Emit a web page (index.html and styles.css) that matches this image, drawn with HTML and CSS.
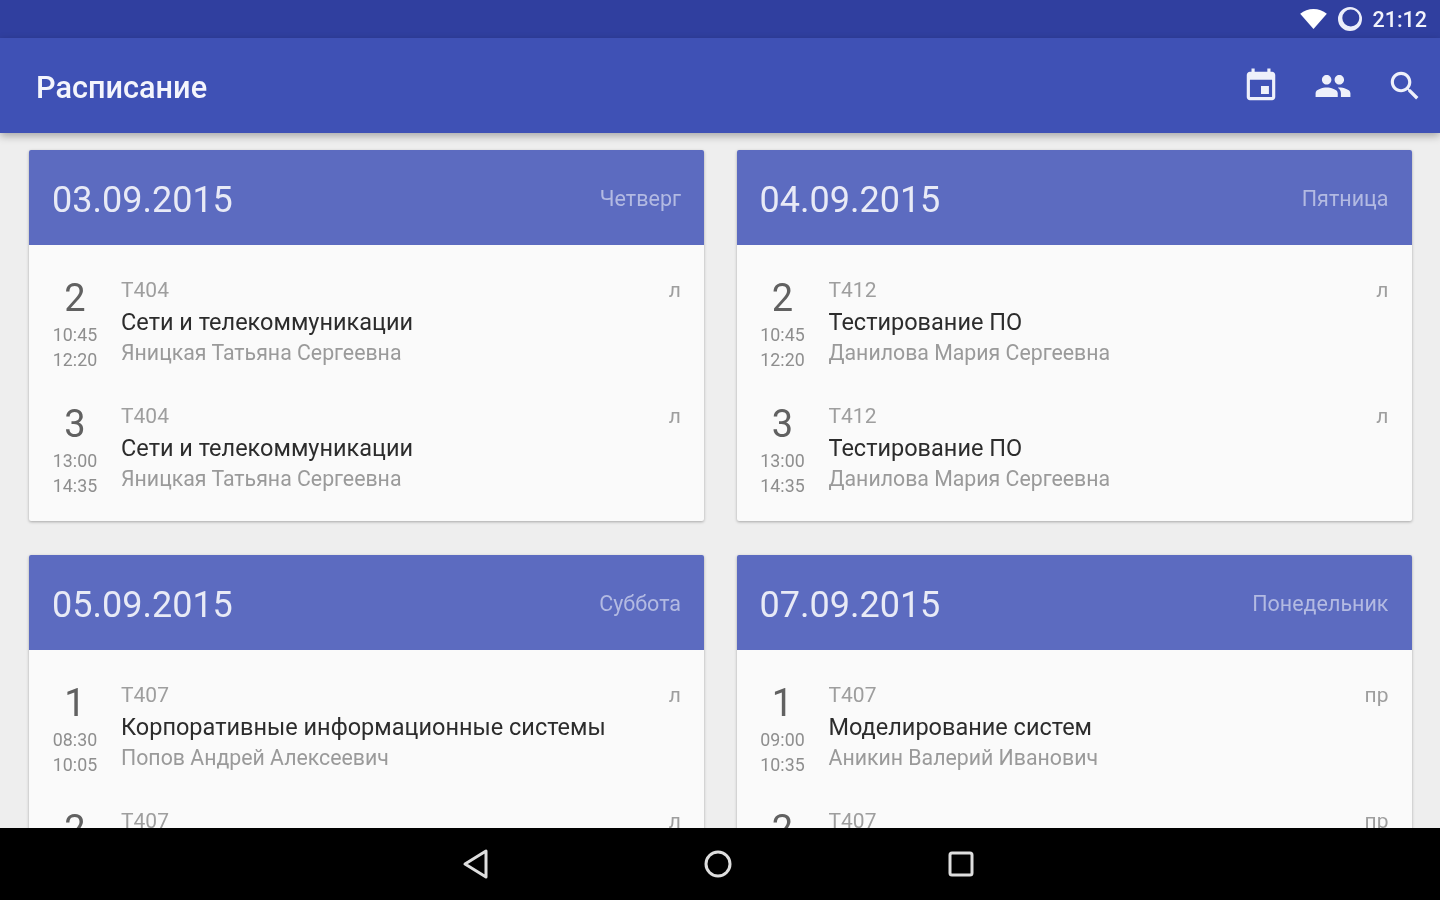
FILE: index.html

```html
<!DOCTYPE html>
<html lang="ru">
<head>
  <meta charset="UTF-8">
  <meta name="viewport" content="width=device-width, initial-scale=1.0">
  <title>Расписание</title>
  <link rel="stylesheet" href="styles.css">
</head>
<body>
  <div class="screen">

    <!-- Status bar -->
    <div class="status-bar">
      <svg class="wifi-icon" viewBox="0 0 28 21"><path d="M14 21L0 5C4 1.800 8.800 0 14 0s10 1.800 14 5z"/></svg>
      <svg class="sync-icon" viewBox="0 0 24 24"><path fill-rule="evenodd" d="M12 0a12 12 0 1 0 0 24a12 12 0 1 0 0-24zM12.800 2.500a8.500 8.500 0 1 1 0 17a8.500 8.500 0 1 1 0-17z"/></svg>
      <span class="clock">21:12</span>
    </div>

    <!-- App bar -->
    <div class="app-bar">
      <div class="app-title">Расписание</div>
      <div class="app-actions">
        <svg class="action-icon" viewBox="0 0 24 24"><path d="M17 12h-5v5h5v-5zM16 1v2H8V1H6v2H5c-1.110 0-1.990.9-1.990 2L3 19c0 1.100.89 2 2 2h14c1.100 0 2-.9 2-2V5c0-1.100-.9-2-2-2h-1V1h-2zm3 18H5V8h14v11z"/></svg>
        <svg class="action-icon" viewBox="0 0 24 24"><path d="M16 11c1.660 0 2.990-1.340 2.990-3S17.660 5 16 5c-1.660 0-3 1.340-3 3s1.340 3 3 3zm-8 0c1.660 0 2.990-1.340 2.990-3S9.660 5 8 5C6.340 5 5 6.340 5 8s1.340 3 3 3zm0 2c-2.330 0-7 1.170-7 3.500V19h14v-2.500c0-2.330-4.670-3.500-7-3.500zm8 0c-.29 0-.62.02-.97.05 1.160.84 1.970 1.970 1.970 3.450V19h6v-2.500c0-2.330-4.670-3.500-7-3.500z"/></svg>
        <svg class="action-icon" viewBox="0 0 24 24"><path d="M15.500 14h-.79l-.28-.27C15.410 12.590 16 11.110 16 9.500 16 5.910 13.090 3 9.500 3S3 5.910 3 9.500 5.910 16 9.500 16c1.610 0 3.090-.59 4.230-1.570l.27.28v.79l5 4.990L20.490 19l-4.990-5zm-6 0C7.010 14 5 11.990 5 9.500S7.010 5 9.500 5 14 7.010 14 9.500 11.990 14 9.500 14z"/></svg>
      </div>
    </div>

    <!-- Days -->
    <div class="content">
      <div class="days">

        <div class="day-card">
          <div class="day-header">
            <div class="day-date">03.09.2015</div>
            <div class="day-name">Четверг</div>
          </div>
          <div class="day-body">
            <div class="lesson">
              <div class="lesson-time">
                <div class="lesson-num">2</div>
                <div class="lesson-clock">10:45</div>
                <div class="lesson-clock">12:20</div>
              </div>
              <div class="lesson-info">
                <div class="lesson-room">Т404</div>
                <div class="lesson-name">Сети и телекоммуникации</div>
                <div class="lesson-teacher">Яницкая Татьяна Сергеевна</div>
              </div>
              <div class="lesson-type">л</div>
            </div>
            <div class="lesson">
              <div class="lesson-time">
                <div class="lesson-num">3</div>
                <div class="lesson-clock">13:00</div>
                <div class="lesson-clock">14:35</div>
              </div>
              <div class="lesson-info">
                <div class="lesson-room">Т404</div>
                <div class="lesson-name">Сети и телекоммуникации</div>
                <div class="lesson-teacher">Яницкая Татьяна Сергеевна</div>
              </div>
              <div class="lesson-type">л</div>
            </div>
          </div>
        </div>

        <div class="day-card">
          <div class="day-header">
            <div class="day-date">04.09.2015</div>
            <div class="day-name">Пятница</div>
          </div>
          <div class="day-body">
            <div class="lesson">
              <div class="lesson-time">
                <div class="lesson-num">2</div>
                <div class="lesson-clock">10:45</div>
                <div class="lesson-clock">12:20</div>
              </div>
              <div class="lesson-info">
                <div class="lesson-room">Т412</div>
                <div class="lesson-name">Тестирование ПО</div>
                <div class="lesson-teacher">Данилова Мария Сергеевна</div>
              </div>
              <div class="lesson-type">л</div>
            </div>
            <div class="lesson">
              <div class="lesson-time">
                <div class="lesson-num">3</div>
                <div class="lesson-clock">13:00</div>
                <div class="lesson-clock">14:35</div>
              </div>
              <div class="lesson-info">
                <div class="lesson-room">Т412</div>
                <div class="lesson-name">Тестирование ПО</div>
                <div class="lesson-teacher">Данилова Мария Сергеевна</div>
              </div>
              <div class="lesson-type">л</div>
            </div>
          </div>
        </div>

        <div class="day-card">
          <div class="day-header">
            <div class="day-date">05.09.2015</div>
            <div class="day-name">Суббота</div>
          </div>
          <div class="day-body">
            <div class="lesson">
              <div class="lesson-time">
                <div class="lesson-num">1</div>
                <div class="lesson-clock">08:30</div>
                <div class="lesson-clock">10:05</div>
              </div>
              <div class="lesson-info">
                <div class="lesson-room">Т407</div>
                <div class="lesson-name">Корпоративные информационные системы</div>
                <div class="lesson-teacher">Попов Андрей Алексеевич</div>
              </div>
              <div class="lesson-type">л</div>
            </div>
            <div class="lesson">
              <div class="lesson-time">
                <div class="lesson-num">2</div>
              </div>
              <div class="lesson-info">
                <div class="lesson-room">Т407</div>
              </div>
              <div class="lesson-type">л</div>
            </div>
          </div>
        </div>

        <div class="day-card">
          <div class="day-header">
            <div class="day-date">07.09.2015</div>
            <div class="day-name">Понедельник</div>
          </div>
          <div class="day-body">
            <div class="lesson">
              <div class="lesson-time">
                <div class="lesson-num">1</div>
                <div class="lesson-clock">09:00</div>
                <div class="lesson-clock">10:35</div>
              </div>
              <div class="lesson-info">
                <div class="lesson-room">Т407</div>
                <div class="lesson-name">Моделирование систем</div>
                <div class="lesson-teacher">Аникин Валерий Иванович</div>
              </div>
              <div class="lesson-type">пр</div>
            </div>
            <div class="lesson">
              <div class="lesson-time">
                <div class="lesson-num">2</div>
              </div>
              <div class="lesson-info">
                <div class="lesson-room">Т407</div>
              </div>
              <div class="lesson-type">пр</div>
            </div>
          </div>
        </div>

      </div>
    </div>

    <!-- Navigation bar -->
    <div class="nav-bar">
      <svg class="nav-icon" viewBox="0 0 28 32"><path d="M25 3v26L4 16z"/></svg>
      <svg class="nav-icon" viewBox="0 0 28 32"><circle cx="14" cy="16" r="12"/></svg>
      <svg class="nav-icon" viewBox="0 0 28 32"><rect x="3" y="5" width="22" height="22" rx="2"/></svg>
    </div>

  </div>
</body>
</html>
```

FILE: styles.css

```css
html,
body {
  margin: 0;
  padding: 0;
  height: 100%;
  overflow: hidden;
}

body {
  font-family: Roboto, "Liberation Sans", sans-serif;
  background-color: #eeeeee;
}

.screen {
  display: flex;
  flex-direction: column;
  height: 900px;
  filter: blur(0.7px);
}

.status-bar {
  display: flex;
  align-items: center;
  justify-content: flex-end;
  height: 38px;
  padding-right: 13px;
  background-color: #303f9f;
  color: #f2f3fb;
  flex-shrink: 0;
}

.wifi-icon {
  width: 27px;
  height: 20px;
  fill: #ffffff;
  margin-right: 11px;
}

.sync-icon {
  width: 24px;
  height: 24px;
  fill: #eceefa;
  margin-right: 10px;
}

.clock {
  font-size: 21.500px;
  font-weight: 500;
}

.app-bar {
  position: relative;
  z-index: 2;
  display: flex;
  align-items: center;
  justify-content: space-between;
  height: 95px;
  padding: 0 16px 0 36px;
  background-color: #3f51b5;
  box-shadow: 0 3px 8px rgba(0, 0, 0, 0.3);
  flex-shrink: 0;
}

.app-title {
  padding-top: 3px;
  color: #f4f5fc;
  font-size: 30.700px;
  font-weight: 500;
}

.app-actions {
  display: flex;
  gap: 34px;
}

.action-icon {
  width: 38px;
  height: 38px;
  fill: #eef0fa;
}

.content {
  flex: 1;
  overflow: hidden;
}

.days {
  display: grid;
  grid-template-columns: 675px 675px;
  gap: 34px 32.500px;
  padding: 17px 28px 0 29px;
}

.day-card {
  border-radius: 2px;
  background-color: #fafafa;
  box-shadow: 0 1px 3px rgba(0, 0, 0, 0.3);
}

.day-header {
  display: flex;
  align-items: center;
  justify-content: space-between;
  height: 93px;
  padding: 2px 23px 0 23px;
  border-radius: 2px 2px 0 0;
  background-color: #5c6bc0;
}

.day-date {
  padding-top: 2px;
  color: #e8eaf6;
  font-size: 36px;
}

.day-name {
  color: #b3bae2;
  font-size: 21.500px;
}

.day-body {
  padding: 12px 0;
}

.lesson {
  display: flex;
  height: 126px;
  padding-right: 23px;
}

.lesson-time {
  width: 46px;
  margin-left: 23px;
  padding-top: 19px;
  text-align: center;
  flex-shrink: 0;
}

.lesson-num {
  color: #616161;
  font-size: 38px;
  line-height: 44px;
  margin-bottom: 2px;
}

.lesson-clock {
  color: #8e8e8e;
  font-size: 17.800px;
  line-height: 25px;
}

.lesson-info {
  flex: 1;
  margin-left: 23px;
  padding-top: 17px;
}

.lesson-room {
  color: #9e9e9e;
  font-size: 21px;
  line-height: 32px;
}

.lesson-teacher {
  color: #9a9a9a;
  font-size: 21.300px;
  line-height: 30px;
}

.lesson-name {
  color: #2c2c2c;
  font-size: 23.500px;
  line-height: 32px;
}

.lesson-type {
  padding-top: 17px;
  color: #9e9e9e;
  font-size: 21px;
  line-height: 32px;
}

.nav-bar {
  display: grid;
  grid-template-columns: repeat(3, 243px);
  justify-content: center;
  justify-items: center;
  align-items: center;
  height: 72px;
  padding-right: 4px;
  background-color: #000000;
  flex-shrink: 0;
}

.nav-icon {
  width: 28px;
  height: 32px;
  fill: none;
  stroke: #dedede;
  stroke-width: 3;
  stroke-linejoin: round;
}
```
